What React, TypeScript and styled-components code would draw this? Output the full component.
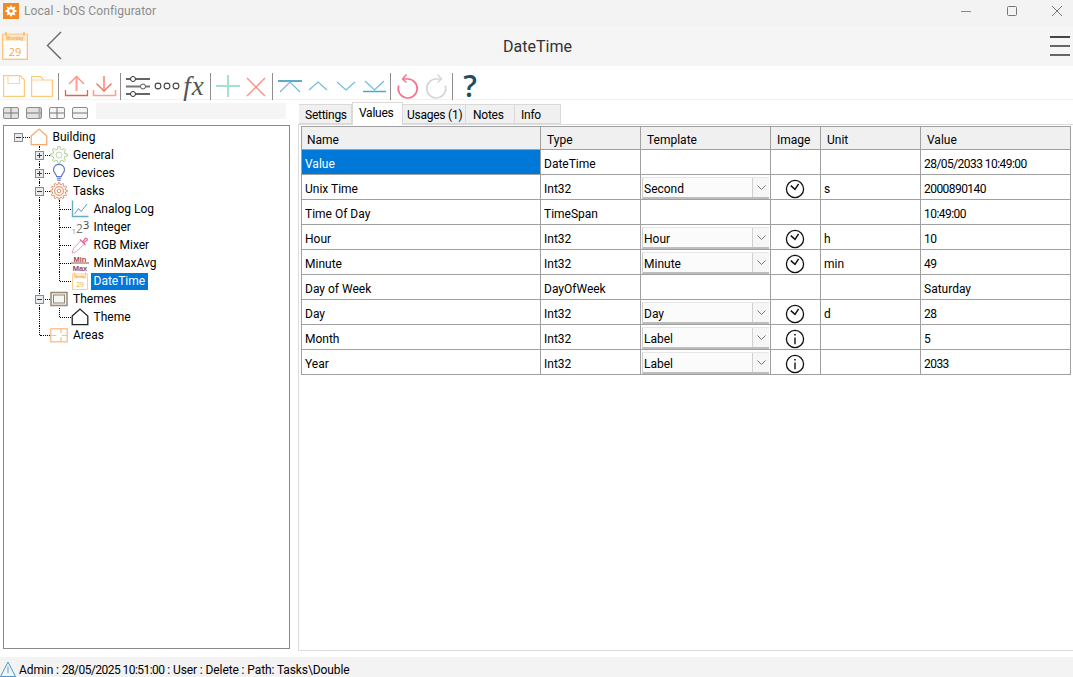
import React from 'react'
import styled, { createGlobalStyle } from 'styled-components'

const GlobalStyle = createGlobalStyle`
  html, body {
    margin: 0;
    padding: 0;
    background: #fff;
  }
  body {
    font-family: Roboto, "Open Sans", "Liberation Sans", sans-serif;
    font-size: 12px;
    color: #000;
    overflow: hidden;
  }
`

// drawn icons

const gearPath = (cx: number, cy: number, outer: number, inner: number, teeth: number) => {
  const pts: string[] = []
  const step = (Math.PI * 2) / teeth
  for (let i = 0; i < teeth; i++) {
    const a = i * step
    const corners: [number, number][] = [
      [a - step * 0.3, inner],
      [a - step * 0.16, outer],
      [a + step * 0.16, outer],
      [a + step * 0.3, inner],
    ]
    corners.forEach(([ang, r]) => {
      pts.push(`${(cx + Math.cos(ang) * r).toFixed(2)} ${(cy + Math.sin(ang) * r).toFixed(2)}`)
    })
  }
  return 'M' + pts.join('L') + 'Z'
}

const CalendarIcon: React.FC<{ size: number }> = ({ size }) => (
  <svg width={size} height={size * 1.12} viewBox="0 0 26 29" fill="none">
    <rect x="0.7" y="3.2" width="24.6" height="25" fill="#fff" stroke="#fbbd6e" strokeWidth="1.2" />
    <rect x="1" y="3.5" width="24" height="6.5" fill="#ffe9cc" />
    <path d="M4 1v4M22 1v4" stroke="#fbbd6e" strokeWidth="1.6" />
    <text x="13" y="9" textAnchor="middle" fontFamily="Liberation Sans" fontWeight="700" fontSize="4.6" fill="#f5ab4e">Monday</text>
    <text x="13" y="24.5" textAnchor="middle" fontFamily="Open Sans" fontSize="11" fill="#f5a94a">29</text>
  </svg>
)

const ClockIcon = () => (
  <svg width="20" height="20" viewBox="0 0 20 20" fill="none" stroke="#111">
    <circle cx="10" cy="10" r="8.6" strokeWidth="1.3" />
    <path d="M5.8 6.6 L10 10.4 L13.6 4.8" strokeWidth="1.5" />
  </svg>
)

const InfoIcon = () => (
  <svg width="20" height="20" viewBox="0 0 20 20" fill="none" stroke="#111">
    <circle cx="10" cy="10" r="8.6" strokeWidth="1.3" />
    <path d="M10 8.4 V15.2" strokeWidth="1.4" />
    <path d="M10 5 V6.6" strokeWidth="1.6" />
  </svg>
)

const Glyph: React.FC<{ children: React.ReactNode }> = ({ children }) => (
  <svg width="28" height="28" viewBox="0 0 28 28" fill="none">
    {children}
  </svg>
)

const SaveGlyph = () => (
  <Glyph>
    <path d="M3.6 3.6H20L24.4 8V24.4H3.6Z" stroke="#fdc97b" strokeWidth="1.2" />
    <path d="M8 3.6V11.5H19.5V3.6" stroke="#fdd79f" strokeWidth="1.1" />
  </Glyph>
)
const FolderGlyph = () => (
  <Glyph>
    <path d="M3.6 4.5H12.5L15.5 8H24.4V24.4H3.6Z" stroke="#fdc97b" strokeWidth="1.2" />
    <path d="M3.6 8H15.5" stroke="#fdd79f" strokeWidth="1.1" />
  </Glyph>
)
const UploadGlyph = () => (
  <Glyph>
    <path d="M3.5 18V23.5H25.5V18" stroke="#e8604c" strokeWidth="1.3" />
    <path d="M14.5 5.5V19" stroke="#ff9f90" strokeWidth="2" />
    <path d="M7 12L14.5 4.5L22 12" stroke="#ff8f7e" strokeWidth="1.3" />
  </Glyph>
)
const DownloadGlyph = () => (
  <Glyph>
    <path d="M3.5 18V23.5H25.5V18" stroke="#ff9f90" strokeWidth="1.6" />
    <path d="M14 4V18" stroke="#ff9f90" strokeWidth="2" />
    <path d="M6.5 11.5L14 19L21.5 11.5" stroke="#f0705c" strokeWidth="1.3" />
  </Glyph>
)
const SlidersGlyph = () => (
  <Glyph>
    <path d="M2 7H6.5M11.5 7H26" stroke="#333" strokeWidth="1.3" />
    <path d="M2 14.5H16.5M21.5 14.5H26" stroke="#777" strokeWidth="1.8" />
    <path d="M2 22H6.5M11.5 22H26" stroke="#333" strokeWidth="1.3" />
    <circle cx="9" cy="7" r="2.5" stroke="#333" />
    <circle cx="19" cy="14.5" r="2.5" stroke="#555" />
    <circle cx="9" cy="22" r="2.5" stroke="#333" />
  </Glyph>
)
const DotsGlyph = () => (
  <Glyph>
    <circle cx="6" cy="14" r="2.9" stroke="#444" strokeWidth="1.1" />
    <circle cx="15" cy="14" r="2.9" stroke="#444" strokeWidth="1.1" />
    <circle cx="24" cy="14" r="2.9" stroke="#444" strokeWidth="1.1" />
  </Glyph>
)
const PlusGlyph = () => (
  <Glyph>
    <path d="M2 14H26M14 3V25" stroke="#a6e2cb" strokeWidth="2" />
  </Glyph>
)
const CrossGlyph = () => (
  <Glyph>
    <path d="M5 6L23 24M23 6L5 24" stroke="#ff8d84" strokeWidth="1.4" />
  </Glyph>
)
const TopGlyph = () => (
  <Glyph>
    <path d="M2 9H26" stroke="#2b8db8" strokeWidth="1.5" />
    <path d="M4 20L14 10L24 20" stroke="#6dbde0" strokeWidth="1.2" />
  </Glyph>
)
const UpGlyph = () => (
  <Glyph>
    <path d="M5 18L14 10L23 18" stroke="#6dbde0" strokeWidth="1.2" />
  </Glyph>
)
const DownGlyph = () => (
  <Glyph>
    <path d="M5 10L14 18L23 10" stroke="#6dbde0" strokeWidth="1.2" />
  </Glyph>
)
const BottomGlyph = () => (
  <Glyph>
    <path d="M5 9L14.5 18L24 9" stroke="#6dbde0" strokeWidth="1.2" />
    <path d="M3 19.5H26" stroke="#4aa8cc" strokeWidth="1.5" />
  </Glyph>
)
const UndoGlyph = () => (
  <Glyph>
    <path d="M9 7H14A9.5 9.5 0 1 1 4.7 13.5" stroke="#f8718f" strokeWidth="1.7" />
    <path d="M12.5 2.5L8.5 7L12.5 10.5" stroke="#f8718f" strokeWidth="1.4" />
  </Glyph>
)
const RedoGlyph = () => (
  <Glyph>
    <path d="M19 7H14A9.5 9.5 0 1 0 23.3 13.5" stroke="#d6d6d6" strokeWidth="1.7" />
    <path d="M15.5 2.5L19.5 7L15.5 10.5" stroke="#d6d6d6" strokeWidth="1.4" />
  </Glyph>
)

const TreeTool: React.FC<{ kind: 'expandAll' | 'collapseAll' | 'expand' | 'collapse' }> = ({ kind }) => (
  <svg width="16" height="12" viewBox="0 0 16 12" fill="none">
    <rect x="0.5" y="0.5" width="15" height="11" rx="1.5" fill={kind === 'expandAll' || kind === 'collapseAll' ? '#e2e2e2' : '#f4f4f4'} stroke="#8c8c8c" />
    {kind === 'collapseAll' || kind === 'collapse' ? <path d="M1 6H15" stroke="#777" /> : <path d="M1 6H15M8 1V11" stroke="#777" />}
    {kind === 'collapseAll' && <path d="M13.5 1V11" stroke="#aaa" strokeWidth="2" />}
  </svg>
)

const HouseIcon: React.FC<{ color: string }> = ({ color }) => (
  <svg width="18" height="18" viewBox="0 0 18 18" fill="none">
    <path d="M1.2 8L9 1L16.8 8V16.6H1.2Z" stroke={color} strokeWidth="1.3" />
  </svg>
)
const GeneralIcon = () => (
  <svg width="18" height="18" viewBox="0 0 18 18" fill="none">
    <path d={gearPath(9, 9, 8.4, 6, 8)} stroke="#aecb96" />
    <circle cx="9" cy="9" r="3" stroke="#bcd6a8" />
  </svg>
)
const TasksIcon = () => (
  <svg width="18" height="18" viewBox="0 0 18 18" fill="none">
    <path d={gearPath(9, 9, 8.4, 6.6, 12)} stroke="#e08c66" />
    <circle cx="9" cy="9" r="4.4" stroke="#e59a7c" strokeWidth="1.3" />
    <circle cx="9" cy="9" r="1.8" stroke="#e08c66" />
  </svg>
)
const BulbIcon = () => (
  <svg width="18" height="18" viewBox="0 0 18 18" fill="none">
    <path d="M6.6 12.5C6.4 10 3.5 9 3.5 5.8A5.5 5.5 0 0 1 14.5 5.8C14.5 9 11.6 10 11.4 12.5Z" stroke="#6079c4" strokeWidth="1.2" />
    <path d="M6.8 14.2H11.2M7.2 16.2H10.8" stroke="#7f94d0" strokeWidth="1.5" />
  </svg>
)
const ChartIcon = () => (
  <svg width="18" height="18" viewBox="0 0 18 18" fill="none">
    <path d="M1.5 0.5V16.5H17.5" stroke="#66adc6" strokeWidth="1.4" />
    <path d="M3.5 14L7.5 8.5L10 11.5L16 4" stroke="#5f9dc4" />
  </svg>
)
const IntegerIcon = () => (
  <svg width="18" height="18" viewBox="0 0 18 18">
    <text x="0.5" y="16" fontFamily="Open Sans" fontSize="8" fill="#999">1</text>
    <text x="5" y="14.5" fontFamily="Open Sans" fontSize="12" fill="#777">2</text>
    <text x="12" y="11" fontFamily="Open Sans" fontSize="11" fill="#444">3</text>
  </svg>
)
const DropperIcon = () => (
  <svg width="18" height="18" viewBox="0 0 18 18" fill="none">
    <path d="M10 4.5L2.5 12.5L1 17L5.5 15.5L13.5 8Z" stroke="#f09abb" />
    <path d="M9 3.5L14.5 9M12 5.5L14.5 2.2A1.7 1.7 0 0 1 16.4 4L13 6.5" stroke="#e96f9e" strokeWidth="1.4" />
  </svg>
)
const MinMaxIcon = () => (
  <svg width="18" height="18" viewBox="0 0 18 18">
    <text x="9" y="7.5" textAnchor="middle" fontFamily="Liberation Sans" fontWeight="700" fontSize="7.5" fill="#9a4a54">Min</text>
    <path d="M0 9H18" stroke="#9a4a54" />
    <text x="9" y="16.5" textAnchor="middle" fontFamily="Liberation Sans" fontWeight="700" fontSize="7.5" fill="#9a4a54">Max</text>
  </svg>
)
const ThemesIcon = () => (
  <svg width="18" height="18" viewBox="0 0 18 18" fill="none">
    <rect x="1" y="2.5" width="16" height="13" stroke="#9d8e7c" strokeWidth="1.6" fill="#f7f5f2" />
    <rect x="3.5" y="5" width="11" height="8" stroke="#8f8474" />
  </svg>
)
const AreasIcon = () => (
  <svg width="18" height="18" viewBox="0 0 18 18" fill="none">
    <rect x="0.8" y="2.8" width="16.4" height="13" stroke="#f9bd8a" strokeWidth="1.3" />
    <path d="M1 9.5H6.5M11 2.8V7M11 11V15.8M12 9.5H17" stroke="#f9bd8a" strokeWidth="1.2" />
  </svg>
)
const ExpanderGlyph: React.FC<{ open: boolean }> = ({ open }) => (
  <svg width="9" height="9" viewBox="0 0 9 9" fill="none">
    <rect x="0.5" y="0.5" width="8" height="8" fill="#e9ecef" stroke="#8b8b8b" />
    <path d={open ? 'M2 4.5H7' : 'M2 4.5H7M4.5 2V7'} stroke="#24407c" />
  </svg>
)

// data

type GuideKind = 'blank' | 'pipe' | 'tee' | 'elbow' | 'stub'

interface TreeItem {
  label: string
  icon: React.ReactNode
  guides: GuideKind[]
  expander?: 'open' | 'closed'
  selected?: boolean
}

const treeItems: TreeItem[] = [
  { label: 'Building', icon: <HouseIcon color="#f5ab70" />, guides: ['stub'], expander: 'open' },
  { label: 'General', icon: <GeneralIcon />, guides: ['blank', 'tee'], expander: 'closed' },
  { label: 'Devices', icon: <BulbIcon />, guides: ['blank', 'tee'], expander: 'closed' },
  { label: 'Tasks', icon: <TasksIcon />, guides: ['blank', 'tee'], expander: 'open' },
  { label: 'Analog Log', icon: <ChartIcon />, guides: ['blank', 'pipe', 'tee'] },
  { label: 'Integer', icon: <IntegerIcon />, guides: ['blank', 'pipe', 'tee'] },
  { label: 'RGB Mixer', icon: <DropperIcon />, guides: ['blank', 'pipe', 'tee'] },
  { label: 'MinMaxAvg', icon: <MinMaxIcon />, guides: ['blank', 'pipe', 'tee'] },
  { label: 'DateTime', icon: <CalendarIcon size={16} />, guides: ['blank', 'pipe', 'elbow'], selected: true },
  { label: 'Themes', icon: <ThemesIcon />, guides: ['blank', 'tee'], expander: 'open' },
  { label: 'Theme', icon: <HouseIcon color="#222" />, guides: ['blank', 'pipe', 'elbow'] },
  { label: 'Areas', icon: <AreasIcon />, guides: ['blank', 'elbow'] },
]

interface ValueRow {
  name: string
  type: string
  template?: string
  image?: 'clock' | 'info'
  unit?: string
  value: string
  selected?: boolean
}

const valueRows: ValueRow[] = [
  { name: 'Value', type: 'DateTime', value: '28/05/2033 10:49:00', selected: true },
  { name: 'Unix Time', type: 'Int32', template: 'Second', image: 'clock', unit: 's', value: '2000890140' },
  { name: 'Time Of Day', type: 'TimeSpan', value: '10:49:00' },
  { name: 'Hour', type: 'Int32', template: 'Hour', image: 'clock', unit: 'h', value: '10' },
  { name: 'Minute', type: 'Int32', template: 'Minute', image: 'clock', unit: 'min', value: '49' },
  { name: 'Day of Week', type: 'DayOfWeek', value: 'Saturday' },
  { name: 'Day', type: 'Int32', template: 'Day', image: 'clock', unit: 'd', value: '28' },
  { name: 'Month', type: 'Int32', template: 'Label', image: 'info', value: '5' },
  { name: 'Year', type: 'Int32', template: 'Label', image: 'info', value: '2033' },
]

const columns = [
  { title: 'Name', width: 239 },
  { title: 'Type', width: 100 },
  { title: 'Template', width: 130 },
  { title: 'Image', width: 50 },
  { title: 'Unit', width: 100 },
  { title: 'Value', width: 150 },
]

const tabs = [
  { label: 'Settings', width: 53, inset: 6 },
  { label: 'Values', width: 51, inset: 6 },
  { label: 'Usages (1)', width: 63, inset: 4 },
  { label: 'Notes', width: 49, inset: 7 },
  { label: 'Info', width: 46, inset: 6 },
]

const App: React.FC = () => {
  return (
    <Window>
      <GlobalStyle />
      <TitleBar>
        <AppBadge>
          <svg width="16" height="16" viewBox="0 0 16 16" fill="none">
            <path d={gearPath(8, 8, 5.6, 4, 8)} fill="#fff" />
            <circle cx="8" cy="8" r="1.8" fill="#f28a24" />
          </svg>
        </AppBadge>
        <AppTitle>Local - bOS Configurator</AppTitle>
        <WindowControls>
          <svg width="10" height="10" viewBox="0 0 10 10" fill="none"><path d="M0 5.5H10" stroke="#888" /></svg>
          <svg width="10" height="10" viewBox="0 0 10 10" fill="none"><rect x="0.5" y="0.5" width="9" height="9" rx="1" stroke="#777" /></svg>
          <svg width="10" height="10" viewBox="0 0 10 10" fill="none"><path d="M0 0L10 10M10 0L0 10" stroke="#777" /></svg>
        </WindowControls>
      </TitleBar>

      <Header>
        <HeaderLeft>
          <CalendarIcon size={26} />
          <svg width="16" height="29" viewBox="0 0 16 29" fill="none">
            <path d="M15 1L1.5 14.5L15 28" stroke="#666" strokeWidth="1.4" />
          </svg>
        </HeaderLeft>
        <HeaderTitle>DateTime</HeaderTitle>
        <Hamburger>
          <span /><span /><span />
        </Hamburger>
      </Header>

      <Toolbar>
        <Tool><SaveGlyph /></Tool>
        <Tool><FolderGlyph /></Tool>
        <Separator />
        <Tool><UploadGlyph /></Tool>
        <Tool><DownloadGlyph /></Tool>
        <Separator />
        <Tool><SlidersGlyph /></Tool>
        <Tool><DotsGlyph /></Tool>
        <Tool><FxLabel>fx</FxLabel></Tool>
        <Separator />
        <Tool><PlusGlyph /></Tool>
        <Tool><CrossGlyph /></Tool>
        <Separator />
        <Tool><TopGlyph /></Tool>
        <Tool><UpGlyph /></Tool>
        <Tool><DownGlyph /></Tool>
        <Tool><BottomGlyph /></Tool>
        <Separator />
        <Tool><UndoGlyph /></Tool>
        <Tool><RedoGlyph /></Tool>
        <Separator />
        <Tool><HelpMark>?</HelpMark></Tool>
      </Toolbar>

      <Main>
        <LeftColumn>
          <TreeToolbar>
            <TreeTool kind="expandAll" />
            <TreeTool kind="collapseAll" />
            <TreeTool kind="expand" />
            <TreeTool kind="collapse" />
            <TreeFilter />
          </TreeToolbar>
          <TreePanel>
            {treeItems.map(item => (
              <TreeRow key={item.label}>
                {item.guides.map((kind, i) => (
                  <Guide key={i} $kind={kind}>
                    {i === item.guides.length - 1 && item.expander && (
                      <Expander><ExpanderGlyph open={item.expander === 'open'} /></Expander>
                    )}
                  </Guide>
                ))}
                <TreeIcon>{item.icon}</TreeIcon>
                <TreeLabel $selected={item.selected}>{item.label}</TreeLabel>
              </TreeRow>
            ))}
          </TreePanel>
        </LeftColumn>

        <RightColumn>
          <TabStrip>
            {tabs.map(tab => (
              <Tab key={tab.label} $width={tab.width} $inset={tab.inset} $active={tab.label === 'Values'}>{tab.label}</Tab>
            ))}
          </TabStrip>
          <TabBody>
            <Grid>
              <colgroup>
                {columns.map(col => <col key={col.title} style={{ width: col.width }} />)}
              </colgroup>
              <thead>
                <tr>
                  {columns.map(col => <HeadCell key={col.title}>{col.title}</HeadCell>)}
                </tr>
              </thead>
              <tbody>
                {valueRows.map(row => (
                  <tr key={row.name}>
                    <Cell $selected={row.selected}>{row.name}</Cell>
                    <Cell>{row.type}</Cell>
                    <TemplateCell>
                      {row.template && (
                        <Combo>
                          <ComboText>{row.template}</ComboText>
                          <ComboButton>
                            <svg width="9" height="5" viewBox="0 0 9 5" fill="none">
                              <path d="M0.5 0.5L4.5 4.5L8.5 0.5" stroke="#777" />
                            </svg>
                          </ComboButton>
                        </Combo>
                      )}
                    </TemplateCell>
                    <ImageCell>
                      {row.image === 'clock' && <ClockIcon />}
                      {row.image === 'info' && <InfoIcon />}
                    </ImageCell>
                    <Cell>{row.unit}</Cell>
                    <Cell>{/\d/.test(row.value) ? <Digits>{row.value}</Digits> : row.value}</Cell>
                  </tr>
                ))}
              </tbody>
            </Grid>
          </TabBody>
        </RightColumn>
      </Main>

      <StatusBar>
        <svg width="16" height="16" viewBox="0 0 16 16" fill="none">
          <path d="M8 1L15.5 15.5H0.5Z" stroke="#4f97c4" />
          <path d="M8 5.5V12" stroke="#7fb6d8" strokeWidth="1.4" />
        </svg>
        <span>Admin : <Digits>28/05/2025 10:51:00</Digits> : User : Delete : Path: Tasks\Double</span>
      </StatusBar>
    </Window>
  )
}

const Window = styled.div`
  width: 1073px;
  height: 677px;
  display: flex;
  flex-direction: column;
  overflow: hidden;
  background: #fff;
`

const TitleBar = styled.div`
  height: 26px;
  flex: none;
  display: flex;
  align-items: center;
  background: #f3f3f3;
  padding: 0 11px 4px 3px;
  box-sizing: border-box;
`

const AppBadge = styled.div`
  width: 16px;
  height: 16px;
  background: #f28a24;
  display: flex;
`

const AppTitle = styled.div`
  margin-left: 5px;
  font-size: 12px;
  letter-spacing: 0.08px;
  color: #8c8c8c;
`

const WindowControls = styled.div`
  margin-left: auto;
  display: flex;
  gap: 35.5px;
  align-items: center;
`

const Header = styled.div`
  height: 40px;
  flex: none;
  display: grid;
  grid-template-columns: 1fr auto 1fr;
  align-items: center;
  background: #f5f5f5;
  padding: 0 3px 0 2px;
  box-sizing: border-box;
`

const HeaderLeft = styled.div`
  display: flex;
  align-items: center;
  gap: 18px;
`

const HeaderTitle = styled.div`
  font-size: 16px;
  color: #333;
  padding-left: 3px;
`

const Hamburger = styled.div`
  justify-self: end;
  width: 20px;
  display: flex;
  flex-direction: column;
  gap: 7px;

  span {
    display: block;
    height: 2px;
    background: #666;
  }
  span:first-child {
    background: #444;
  }
`

const Toolbar = styled.div`
  height: 34px;
  flex: none;
  box-sizing: border-box;
  padding-top: 6px;
  display: flex;
  align-items: flex-start;
  border-bottom: 1px solid #f2f2f2;
`

const Tool = styled.div`
  width: 28px;
  height: 28px;
  display: flex;
  align-items: center;
  justify-content: center;
`

const Separator = styled.div`
  width: 1px;
  height: 27px;
  margin: 1px 3px 0 2px;
  background: #8f8f8f;
`

const FxLabel = styled.span`
  font-family: "Liberation Serif", serif;
  font-style: italic;
  font-size: 27px;
  line-height: 28px;
  letter-spacing: 1px;
  color: #555;
`

const HelpMark = styled.span`
  font-family: "Open Sans", sans-serif;
  font-weight: 600;
  font-size: 30px;
  line-height: 28px;
  color: #1f4e63;
`

const Main = styled.div`
  flex: 1;
  min-height: 0;
  display: grid;
  grid-template-columns: 298px 1fr;
`

const LeftColumn = styled.div`
  display: flex;
  flex-direction: column;
  min-height: 0;
`

const TreeToolbar = styled.div`
  height: 25px;
  flex: none;
  box-sizing: border-box;
  display: flex;
  align-items: center;
  gap: 7px;
  padding: 0 4px 0 3px;
`

const TreeFilter = styled.div`
  width: 190px;
  height: 16px;
  margin: -4px 0 0 1px;
  background: #f5f5f5;
`

const TreePanel = styled.div`
  flex: 1;
  margin: 0 8px 8px 3px;
  box-sizing: border-box;
  border: 1px solid #8a8a8a;
  padding: 2px 0 0 4px;
`

const TreeRow = styled.div`
  height: 18px;
  display: flex;
  align-items: center;
`

const Guide = styled.div<{ $kind: GuideKind }>`
  width: 20.5px;
  height: 18px;
  flex: none;
  position: relative;

  &::before {
    content: '';
    display: ${p => (p.$kind === 'pipe' || p.$kind === 'tee' || p.$kind === 'elbow' ? 'block' : 'none')};
    position: absolute;
    left: 10px;
    top: 0;
    height: ${p => (p.$kind === 'elbow' ? '9px' : '18px')};
    border-left: 1px dotted #000;
  }
  &::after {
    content: '';
    display: ${p => (p.$kind === 'tee' || p.$kind === 'elbow' || p.$kind === 'stub' ? 'block' : 'none')};
    position: absolute;
    left: 11px;
    right: -1px;
    top: 9px;
    border-top: 1px dotted #000;
  }
`

const Expander = styled.div`
  position: absolute;
  left: 6px;
  top: 5px;
  width: 9px;
  height: 9px;
  z-index: 1;
  display: flex;
`

const TreeIcon = styled.div`
  width: 18px;
  height: 18px;
  margin-left: 1px;
  flex: none;
  display: flex;
  align-items: center;
  justify-content: center;
`

const TreeLabel = styled.div<{ $selected?: boolean }>`
  margin-left: 2px;
  padding: 0 3px;
  height: 17px;
  line-height: 17px;
  white-space: nowrap;
  background: ${p => (p.$selected ? '#0078d7' : 'transparent')};
  color: ${p => (p.$selected ? '#fff' : '#000')};
`

const RightColumn = styled.div`
  display: flex;
  flex-direction: column;
  min-height: 0;
  padding-bottom: 6px;
`

const TabStrip = styled.div`
  height: 24px;
  flex: none;
  display: flex;
  align-items: flex-end;
  padding-left: 1px;
`

const Tab = styled.div<{ $active?: boolean; $width: number; $inset: number }>`
  box-sizing: border-box;
  width: ${p => p.$width}px;
  height: ${p => (p.$active ? '23px' : '20px')};
  padding: ${p => (p.$active ? `0 0 3px ${p.$inset}px` : `1px 0 0 ${p.$inset}px`)};
  margin-bottom: ${p => (p.$active ? '-1px' : '0')};
  display: flex;
  align-items: center;
  letter-spacing: -0.25px;
  background: ${p => (p.$active ? '#fff' : '#f0f0f0')};
  border: 1px solid #d9d9d9;
  border-bottom: ${p => (p.$active ? 'none' : '1px solid #d9d9d9')};
  border-left: ${p => (p.$active ? '1px solid #d9d9d9' : 'none')};
  white-space: nowrap;
  position: relative;
  z-index: ${p => (p.$active ? 1 : 0)};
`

const TabBody = styled.div`
  flex: 1;
  border: 1px solid #dcdcdc;
  border-right: none;
  padding: 1px 0 0 2px;
`

const Grid = styled.table`
  border-collapse: collapse;
  table-layout: fixed;
  width: 769px;
`

const HeadCell = styled.th`
  height: 23px;
  padding: 4px 6px 0;
  box-sizing: border-box;
  font-weight: 400;
  text-align: left;
  background: #f0f0f0;
  border: 1px solid #a0a0a0;

  &:first-child {
    padding-left: 5px;
  }
`

const Cell = styled.td<{ $selected?: boolean }>`
  height: 25px;
  padding: 4px 3px 0;
  box-sizing: border-box;
  white-space: nowrap;
  background: ${p => (p.$selected ? '#0078d7' : '#fff')};
  color: ${p => (p.$selected ? '#fff' : '#000')};
  border: 1px solid #a0a0a0;
`

const Digits = styled.span`
  letter-spacing: -0.55px;
`

const TemplateCell = styled.td`
  height: 25px;
  padding: 1px 0 0;
  box-sizing: border-box;
  border: 1px solid #a0a0a0;
`

const ImageCell = styled(TemplateCell)`
  text-align: center;
  line-height: 0;
  padding: 3px 1px 0 0;

  svg {
    vertical-align: middle;
  }
`

const Combo = styled.div`
  height: 22px;
  margin: 0 1px;
  box-sizing: border-box;
  display: flex;
  align-items: stretch;
  background: #fbfbfb;
  border-left: 1px solid #cfcfcf;
  border-top: 1px solid #e6e6e6;
  border-bottom: 2px solid #bdbdbd;
`

const ComboText = styled.div`
  flex: 1;
  padding: 3px 0 0 1px;
  display: flex;
  align-items: center;
`

const ComboButton = styled.div`
  width: 16px;
  flex: none;
  display: flex;
  align-items: center;
  justify-content: center;
  background: #f6f6f6;
  border-left: 1px solid #d0d0d0;
`

const StatusBar = styled.div`
  height: 20px;
  flex: none;
  display: flex;
  align-items: flex-end;
  gap: 3px;
  background: #f3f3f3;
  line-height: 14px;
  letter-spacing: -0.1px;
  overflow: hidden;
`

export default App
